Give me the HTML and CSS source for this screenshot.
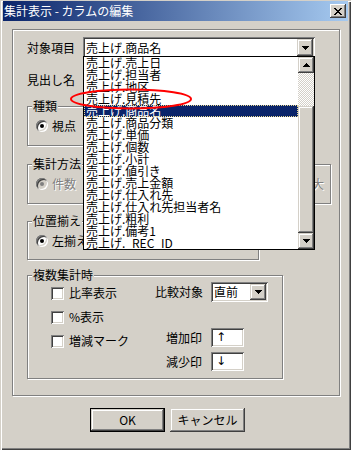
FILE: index.html
```html
<!DOCTYPE html>
<html lang="ja">
<head>
  <meta charset="UTF-8">
  <title>集計表示 - カラムの編集</title>
  <link rel="stylesheet" href="styles.css">
</head>
<body>
  <div class="window">
    <div class="titlebar">
      <span class="title">集計表示 - カラムの編集</span>
      <span class="close-btn">
        <svg width="8" height="7" viewBox="0 0 8 7" shape-rendering="crispEdges">
          <path d="M0 0h2v1H0zM6 0h2v1H6zM1 1h2v1H1zM5 1h2v1H5zM2 2h4v1H2zM3 3h2v1H3zM2 4h4v1H2zM1 5h2v1H1zM5 5h2v1H5zM0 6h2v1H0zM6 6h2v1H6z"/>
        </svg>
      </span>
    </div>

    <div class="client">
      <div class="frame">
        <div class="row">
          <span class="label">対象項目</span>
          <div class="combo wide">
            <span class="combo-text">売上げ.商品名</span>
            <span class="drop-btn"><svg width="7" height="4" viewBox="0 0 7 4" shape-rendering="crispEdges"><path d="M0 0h7v1H0zM1 1h5v1H1zM2 2h3v1H2zM3 3h1v1H3z"/></svg></span>

            <!-- 開いたドロップダウン -->
            <div class="droplist">
              <ul class="items">
                <li>売上げ.売上日</li>
                <li>売上げ.担当者</li>
                <li>売上げ.地区</li>
                <li>売上げ.見積先</li>
                <li class="selected">売上げ.商品名</li>
                <li>売上げ.商品分類</li>
                <li>売上げ.単価</li>
                <li>売上げ.個数</li>
                <li>売上げ.小計</li>
                <li>売上げ.値引き</li>
                <li>売上げ.売上金額</li>
                <li>売上げ.仕入れ先</li>
                <li>売上げ.仕入れ先担当者名</li>
                <li>売上げ.粗利</li>
                <li>売上げ.備考1</li>
                <li>売上げ._REC_ID_</li>
              </ul>
              <div class="vscroll">
                <span class="sb-btn"><svg width="7" height="4" viewBox="0 0 7 4" shape-rendering="crispEdges"><path d="M3 0h1v1H3zM2 1h3v1H2zM1 2h5v1H1zM0 3h7v1H0z"/></svg></span>
                <span class="sb-track"></span>
                <span class="sb-thumb"></span>
                <span class="sb-btn"><svg width="7" height="4" viewBox="0 0 7 4" shape-rendering="crispEdges"><path d="M0 0h7v1H0zM1 1h5v1H1zM2 2h3v1H2zM3 3h1v1H3z"/></svg></span>
              </div>
              <svg class="mark" width="124" height="22" viewBox="0 0 124 22">
                <ellipse cx="62" cy="11" rx="60" ry="9.5" fill="none" stroke="#ff0000" stroke-width="2"/>
              </svg>
            </div>
          </div>
        </div>

        <div class="row">
          <span class="label">見出し名</span>
          <div class="textbox wide"></div>
        </div>

        <div class="group kind">
          <span class="group-title">種類</span>
          <div class="options">
            <label class="opt"><span class="radio checked"></span>視点</label>
          </div>
        </div>

        <div class="group method">
          <span class="group-title">集計方法</span>
          <div class="options">
            <label class="opt disabled"><span class="radio checked"></span>件数</label>
            <label class="opt disabled last"><span class="radio"></span>最大</label>
          </div>
        </div>

        <div class="group align">
          <span class="group-title">位置揃え</span>
          <div class="options">
            <label class="opt"><span class="radio checked"></span>左揃え</label>
          </div>
        </div>

        <div class="group multi">
          <span class="group-title">複数集計時</span>
          <div class="checks">
            <label class="opt"><span class="checkbox"></span>比率表示</label>
            <label class="opt"><span class="checkbox"></span>%表示</label>
            <label class="opt"><span class="checkbox"></span>増減マーク</label>
          </div>
          <div class="pairs">
            <div class="pair">
              <span class="plabel">比較対象</span>
              <div class="combo small">
                <span class="combo-text">直前</span>
                <span class="drop-btn"><svg width="7" height="4" viewBox="0 0 7 4" shape-rendering="crispEdges"><path d="M0 0h7v1H0zM1 1h5v1H1zM2 2h3v1H2zM3 3h1v1H3z"/></svg></span>
              </div>
            </div>
            <div class="pair spaced">
              <span class="plabel">増加印</span>
              <div class="textbox mark-box">↑</div>
            </div>
            <div class="pair">
              <span class="plabel">減少印</span>
              <div class="textbox mark-box">↓</div>
            </div>
          </div>
        </div>
      </div>

      <div class="buttons">
        <button class="btn default">OK</button>
        <button class="btn">キャンセル</button>
      </div>
    </div>
  </div>
</body>
</html>
```

FILE: styles.css
```css
:root {
  --face: #d4d0c8;
  --shadow: #808080;
  --dark: #404040;
  --light: #fff;
  --select: #0a246a;
}
body {
  margin: 0;
  background: var(--face);
  font-family: "Noto Sans CJK JP", sans-serif;
  font-size: 12px;
  line-height: 14px;
  color: #000;
}

/* ウィンドウ枠 */
.window {
  width: 351px;
  height: 450px;
  box-sizing: border-box;
  padding: 1px 3px 3px 3px;
  background: var(--face);
  box-shadow: inset 1px 1px var(--face), inset 2px 2px var(--light),
    inset -1px -1px var(--dark), inset -2px -2px var(--shadow);
}
.titlebar {
  height: 20px;
  display: flex;
  align-items: center;
  justify-content: space-between;
  padding: 0 2px 0 1px;
  background: linear-gradient(to right, #0a246a, #a6caf0);
}
.title {
  color: #fff;
  font-size: 12px;
}
.close-btn {
  width: 16px;
  height: 14px;
  display: flex;
  align-items: center;
  justify-content: center;
  background: var(--face);
  box-shadow: inset -1px -1px var(--dark), inset 1px 1px var(--light),
    inset -2px -2px var(--shadow);
}

/* 共通の3D表現 */
.combo,
.textbox {
  box-sizing: border-box;
  background: #fff;
  box-shadow: inset 1px 1px var(--shadow), inset -1px -1px var(--light),
    inset 2px 2px var(--dark), inset -2px -2px var(--face);
}
.drop-btn,
.sb-btn,
.sb-thumb,
.btn {
  background: var(--face);
  box-shadow: inset -1px -1px var(--dark), inset 1px 1px var(--face),
    inset -2px -2px var(--shadow), inset 2px 2px var(--light);
}

.frame {
  width: 328px;
  height: 367px;
  box-sizing: border-box;
  margin: 8px 0 0 9px;
  padding: 7px 0 0 14px;
  border: 1px solid var(--shadow);
  box-shadow: inset 1px 1px var(--light), 1px 1px var(--light);
}
.row {
  display: flex;
  align-items: center;
  height: 21px;
}
.row + .row {
  margin-top: 11px;
}
.label {
  width: 56px;
}
.wide {
  width: 232px;
  height: 21px;
}

/* コンボボックス */
.combo {
  position: relative;
  display: flex;
  align-items: center;
  padding: 2px;
}
.combo-text {
  flex: 1;
  padding-left: 1px;
  white-space: nowrap;
}
.drop-btn {
  width: 16px;
  align-self: stretch;
  display: flex;
  align-items: center;
  justify-content: center;
}
.combo.small {
  width: 57px;
  height: 20px;
}

/* ドロップダウンリスト */
.droplist {
  position: absolute;
  left: 0;
  top: 19px;
  z-index: 5;
  width: 232px;
  height: 194px;
  box-sizing: border-box;
  border: 1px solid #000;
  background: #fff;
  display: flex;
}
.items {
  flex: 1;
  list-style: none;
  margin: 0;
  padding: 0;
  font-feature-settings: "palt";
}
.items li {
  height: 12px;
  line-height: 12px;
  padding-left: 2px;
  white-space: nowrap;
}
.items li.selected {
  background: var(--select);
  color: #fff;
  outline: 1px dotted #e8d890;
  outline-offset: -1px;
}
.vscroll {
  width: 16px;
  display: flex;
  flex-direction: column;
}
.sb-btn {
  height: 16px;
  display: flex;
  align-items: center;
  justify-content: center;
}
.sb-track {
  height: 33px;
  background: repeating-conic-gradient(#fff 0 25%, var(--face) 0 50%) 0 0 / 2px 2px;
}
.sb-thumb {
  flex: 1;
}
.mark {
  position: absolute;
  left: -15px;
  top: 31px;
  overflow: visible;
}

/* グループボックス */
.group {
  position: relative;
  box-sizing: border-box;
  border: 1px solid var(--shadow);
  box-shadow: inset 1px 1px var(--light), 1px 1px var(--light);
}
.group-title {
  position: absolute;
  top: -8px;
  left: 4px;
  padding: 0 1px;
  background: var(--face);
}
.kind {
  margin-top: 16px;
  width: 232px;
  height: 40px;
}
.method {
  margin-top: 18px;
  width: 304px;
  height: 40px;
}
.align {
  margin-top: 17px;
  width: 232px;
  height: 39px;
}
.multi {
  margin-top: 15px;
  width: 256px;
  height: 104px;
  display: flex;
}
.options {
  display: flex;
  padding: 12px 6px 0 8px;
}
.opt {
  display: flex;
  align-items: center;
  height: 14px;
  gap: 4px;
  white-space: nowrap;
}
.opt.last {
  margin-left: auto;
}
.opt.disabled {
  color: var(--shadow);
  text-shadow: 1px 1px var(--light);
}

.radio {
  position: relative;
  width: 12px;
  height: 12px;
  border-radius: 50%;
  background: #fff;
  box-shadow: inset 1px 1px var(--shadow), inset -1px -1px var(--light),
    inset 2px 2px var(--dark), inset -2px -2px var(--face);
}
.radio.checked::after {
  content: '';
  position: absolute;
  left: 4px;
  top: 4px;
  width: 4px;
  height: 4px;
  border-radius: 50%;
  background: #000;
}
.disabled .radio {
  background: var(--face);
}
.disabled .radio.checked::after {
  background: var(--shadow);
}

.checkbox {
  width: 13px;
  height: 13px;
  background: #fff;
  margin-right: 1px;
  box-shadow: inset 1px 1px var(--shadow), inset -1px -1px var(--light),
    inset 2px 2px var(--dark), inset -2px -2px var(--face);
}

/* 複数集計時 */
.checks {
  width: 104px;
  padding: 10px 0 0 23px;
  display: flex;
  flex-direction: column;
  gap: 10px;
}
.pairs {
  padding-top: 6px;
  display: flex;
  flex-direction: column;
}
.pair {
  display: flex;
  align-items: center;
  gap: 9px;
}
.pair + .pair {
  margin-top: 5px;
}
.pair.spaced {
  margin-top: 26px;
}
.plabel {
  width: 47px;
  text-align: right;
  white-space: nowrap;
}
.mark-box {
  width: 33px;
  height: 19px;
  padding: 2px 0 0 5px;
  line-height: 15px;
  font-family: "DejaVu Sans", sans-serif;
}

/* ボタン */
.buttons {
  display: flex;
  gap: 5px;
  margin: 12px 0 0 87px;
}
.btn {
  width: 75px;
  height: 24px;
  box-sizing: border-box;
  border: 0;
  padding: 0;
  font: inherit;
  color: #000;
}
.btn.default {
  border: 1px solid #000;
}
```
